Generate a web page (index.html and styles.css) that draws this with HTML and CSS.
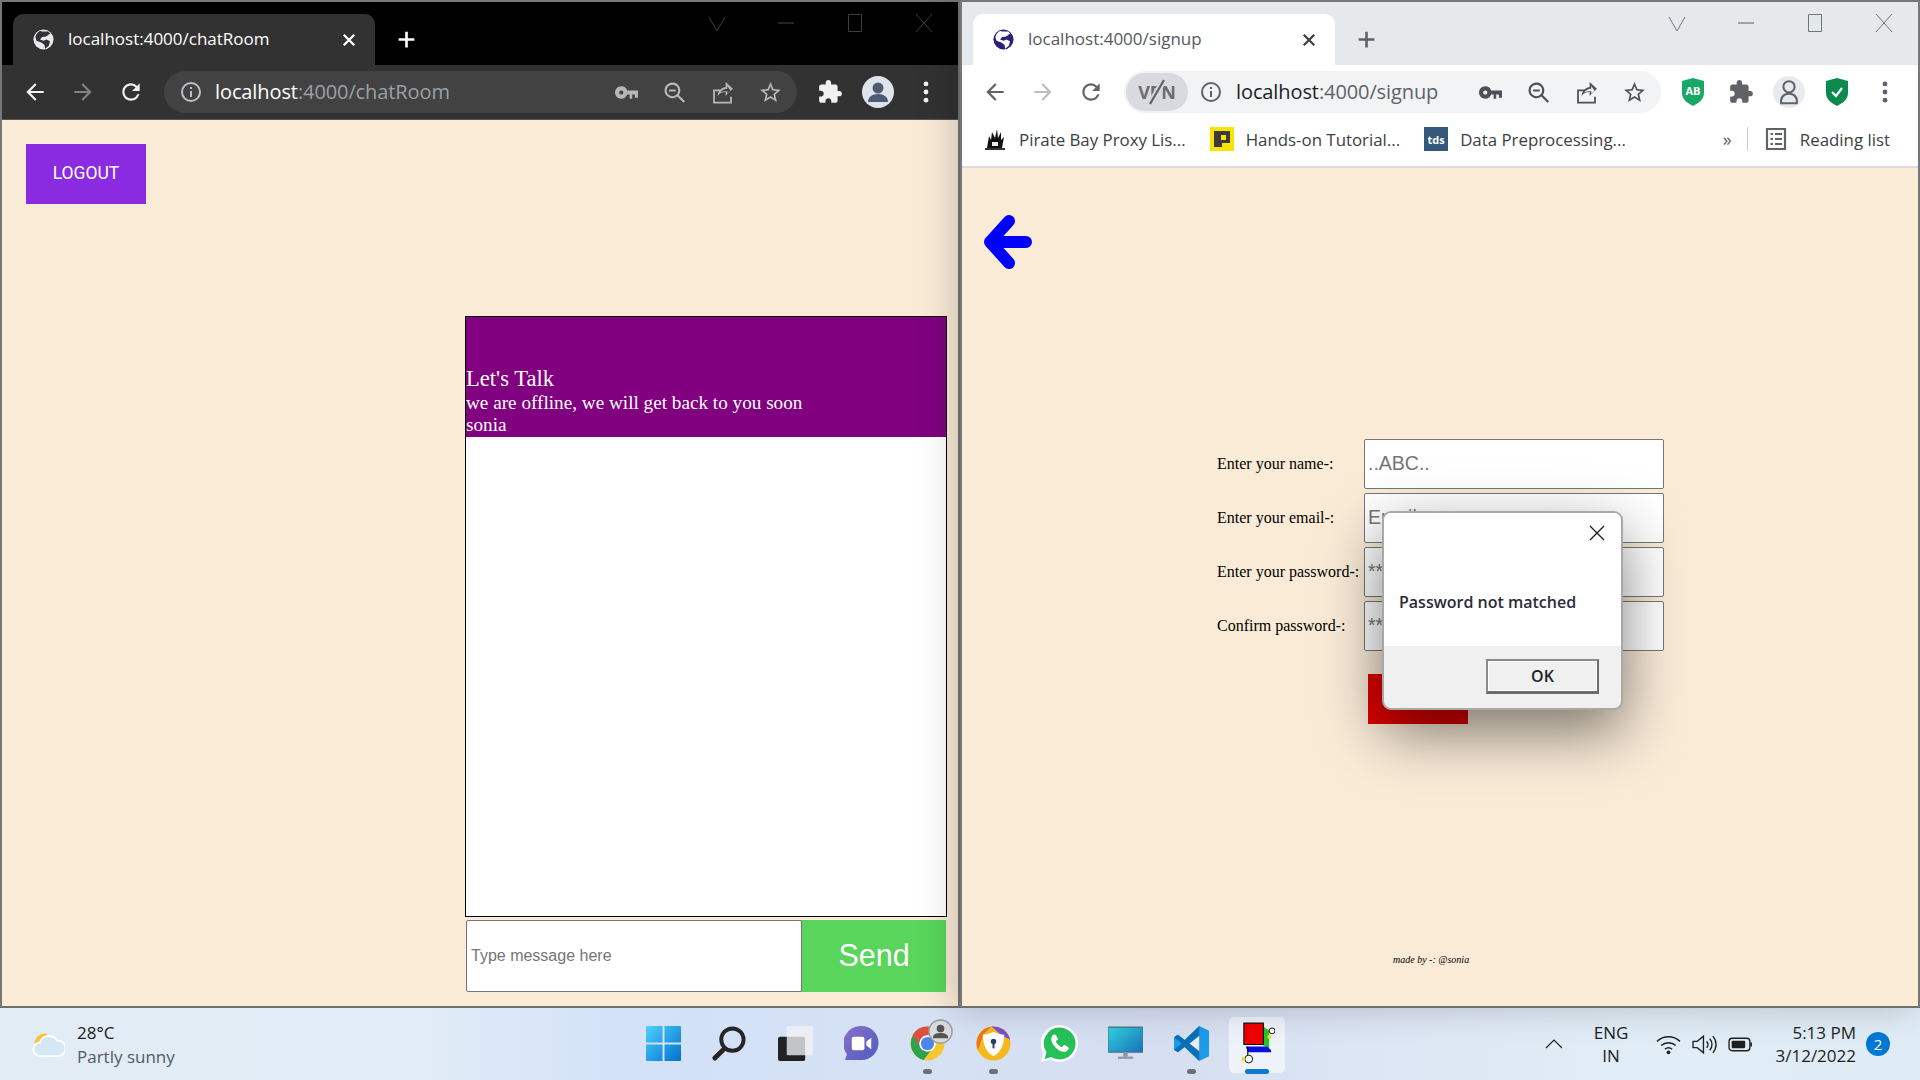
FILE: index.html
```html
<!DOCTYPE html>
<html lang="en">
<head>
<meta charset="utf-8">
<title>Chat room and signup</title>
<link rel="stylesheet" href="styles.css">
</head>
<body>
<svg class="defs" aria-hidden="true">
  <symbol id="back" viewBox="0 0 24 24"><path d="M20 11H7.83l5.59-5.59L12 4l-8 8 8 8 1.41-1.41L7.83 13H20z"/></symbol>
  <symbol id="fwd" viewBox="0 0 24 24"><path d="M4 11h12.17l-5.59-5.59L12 4l8 8-8 8-1.41-1.41L16.17 13H4z"/></symbol>
  <symbol id="reload" viewBox="0 0 24 24"><path d="M17.65 6.35A7.958 7.958 0 0 0 12 4c-4.42 0-7.99 3.58-7.99 8s3.57 8 7.99 8c3.73 0 6.84-2.55 7.73-6h-2.08A5.99 5.99 0 0 1 12 18c-3.31 0-6-2.69-6-6s2.69-6 6-6c1.66 0 3.14.69 4.22 1.78L13 11h7V4l-2.35 2.35z"/></symbol>
  <symbol id="info" viewBox="0 0 24 24"><path d="M11 7h2v2h-2zm0 4h2v6h-2zm1-9a10 10 0 1 0 0 20 10 10 0 0 0 0-20zm0 18a8 8 0 1 1 0-16 8 8 0 0 1 0 16z"/></symbol>
  <symbol id="key" viewBox="0 0 24 24"><path d="M12.65 10A6 6 0 0 0 7 6c-3.31 0-6 2.69-6 6s2.69 6 6 6a6 6 0 0 0 5.65-4H15v4h2.5v-4H20v3h3v-7H12.65zM7 14c-1.1 0-2-.9-2-2s.9-2 2-2 2 .9 2 2-.9 2-2 2z"/></symbol>
  <symbol id="zoomout" viewBox="0 0 24 24"><path d="M10 2.5a7.5 7.5 0 1 0 4.6 13.4l6 6 1.5-1.5-6-6A7.5 7.5 0 0 0 10 2.5zm0 2a5.5 5.5 0 1 1 0 11 5.5 5.5 0 0 1 0-11zM6.8 9h6.4v2H6.800z"/></symbol>
  <symbol id="share" viewBox="0 0 24 24"><path d="M3 9h7v1.700H4.700v10.200h14.600V16H21v6.600H3zM15 2l7 6.500-7 6.500v-3.600c-3.600 0-6 1.300-7.700 4.100.4-4.600 3-7.900 7.700-8.700zm1.600 3.700v2.700c-3.300.2-5.400 1.500-6.700 3.600 1.600-.8 3.800-1.200 6.700-1.100v2.400l3.100-2.900z"/></symbol>
  <symbol id="star" viewBox="0 0 24 24"><path d="M22 9.240l-7.190-.62L12 2 9.190 8.630 2 9.240l5.460 4.730L5.820 21 12 17.270 18.180 21l-1.630-7.030L22 9.240zM12 15.400l-3.760 2.270 1-4.280-3.320-2.880 4.380-.38L12 6.100l1.710 4.040 4.380.38-3.320 2.880 1 4.280L12 15.400z"/></symbol>
  <symbol id="puzzle" viewBox="0 0 24 24"><path d="M20.500 11H19V7c0-1.100-.9-2-2-2h-4V3.500C13 2.120 11.880 1 10.500 1S8 2.120 8 3.500V5H4c-1.100 0-1.990.9-1.990 2v3.800H3.500c1.490 0 2.700 1.210 2.700 2.700s-1.210 2.700-2.700 2.700H2V20c0 1.100.9 2 2 2h3.800v-1.500c0-1.490 1.210-2.700 2.700-2.700 1.490 0 2.700 1.210 2.700 2.700V22H17c1.100 0 2-.9 2-2v-4h1.500c1.380 0 2.500-1.120 2.500-2.500S21.880 11 20.500 11z"/></symbol>
  <symbol id="dots" viewBox="0 0 24 24"><circle cx="12" cy="4.500" r="2.200"/><circle cx="12" cy="12" r="2.200"/><circle cx="12" cy="19.500" r="2.200"/></symbol>
  <symbol id="close" viewBox="0 0 24 24"><path d="M5 5l14 14M19 5L5 19" fill="none" stroke="currentColor" stroke-width="3"/></symbol>
  <symbol id="plus" viewBox="0 0 24 24"><path d="M12 3v18M3 12h18" fill="none" stroke="currentColor" stroke-width="3"/></symbol>
  <symbol id="globe" viewBox="0 0 24 24"><circle cx="12" cy="12" r="11.500"/><path class="land" d="M8 2.200c3 1 6.500.6 9 .6 1.200.8 2 1.400 2.600 2.200L15 8.500l-4.500.5L8 12l4 1.500 3.500-1.500 4 2-1.500 5-4 3.500-1-4.500-3.500-2.500L4 13.500 2.700 9C3.700 5.800 5.500 3.400 8 2.200z"/></symbol>
  <symbol id="chev" viewBox="0 0 20 20"><path d="M2 4l8 14 8-14" fill="none" stroke="currentColor" stroke-width="1"/></symbol>
  <symbol id="mini" viewBox="0 0 20 20"><path d="M2 10h16" fill="none" stroke="currentColor" stroke-width="1.200"/></symbol>
  <symbol id="maxi" viewBox="0 0 20 20"><path d="M3.500 1.500h13v17h-13z" fill="none" stroke="currentColor" stroke-width="1"/></symbol>
  <symbol id="wclose" viewBox="0 0 20 20"><path d="M2 1l16 18M18 1L2 19" fill="none" stroke="currentColor" stroke-width="1"/></symbol>
</svg>

<main class="desktop">
  <section class="window dark">
    <div class="tabstrip">
      <div class="tab">
        <svg class="fav"><use href="#globe"/></svg>
        <span class="tab-title">localhost:4000/chatRoom</span>
        <svg class="tab-x"><use href="#close"/></svg>
      </div>
      <svg class="newtab"><use href="#plus"/></svg>
      <div class="winctl">
        <span class="wc"><svg class="wc-i"><use href="#chev"/></svg></span>
        <span class="wc"><svg class="wc-i"><use href="#mini"/></svg></span>
        <span class="wc"><svg class="wc-i"><use href="#maxi"/></svg></span>
        <span class="wc"><svg class="wc-i"><use href="#wclose"/></svg></span>
      </div>
    </div>
    <div class="toolbar">
      <span class="btn"><svg class="ic"><use href="#back"/></svg></span>
      <span class="btn muted"><svg class="ic"><use href="#fwd"/></svg></span>
      <span class="btn"><svg class="ic"><use href="#reload"/></svg></span>
      <div class="omni">
        <span class="omni-info"><svg class="ic"><use href="#info"/></svg></span>
        <span class="url"><b>localhost</b>:4000/chatRoom</span>
        <span class="btn omni-ic"><svg class="ic"><use href="#key"/></svg></span>
        <span class="btn omni-ic"><svg class="ic"><use href="#zoomout"/></svg></span>
        <span class="btn omni-ic"><svg class="ic"><use href="#share"/></svg></span>
        <span class="btn omni-ic"><svg class="ic"><use href="#star"/></svg></span>
      </div>
      <span class="btn ext"><svg class="ic"><use href="#puzzle"/></svg></span>
      <span class="btn">
        <svg class="avatar" viewBox="0 0 32 32"><circle cx="16" cy="16" r="16" fill="#dfe4ec"/><circle cx="16" cy="12" r="5.500" fill="#4d5c73"/><path d="M6 26c0-5 4-8 10-8s10 3 10 8z" fill="#4d5c73"/></svg>
      </span>
      <span class="btn"><svg class="ic"><use href="#dots"/></svg></span>
    </div>
    <div class="page chat-page">
      <button class="logout">LOGOUT</button>
      <div class="chat">
        <div class="chat-head">
          <div class="chat-title">Let's Talk</div>
          <div class="chat-sub">we are offline, we will get back to you soon</div>
          <div class="chat-sub">sonia</div>
        </div>
      </div>
      <div class="composer">
        <input class="msg" placeholder="Type message here">
        <button class="send">Send</button>
      </div>
    </div>
  </section>

  <section class="window light">
    <div class="tabstrip">
      <div class="tab">
        <svg class="fav"><use href="#globe"/></svg>
        <span class="tab-title">localhost:4000/signup</span>
        <svg class="tab-x"><use href="#close"/></svg>
      </div>
      <svg class="newtab"><use href="#plus"/></svg>
      <div class="winctl">
        <span class="wc"><svg class="wc-i"><use href="#chev"/></svg></span>
        <span class="wc"><svg class="wc-i"><use href="#mini"/></svg></span>
        <span class="wc"><svg class="wc-i"><use href="#maxi"/></svg></span>
        <span class="wc"><svg class="wc-i"><use href="#wclose"/></svg></span>
      </div>
    </div>
    <div class="toolbar">
      <span class="btn"><svg class="ic"><use href="#back"/></svg></span>
      <span class="btn muted"><svg class="ic"><use href="#fwd"/></svg></span>
      <span class="btn"><svg class="ic"><use href="#reload"/></svg></span>
      <div class="omni omni-short">
        <span class="vpn">VPN<svg class="vpn-slash" viewBox="0 0 30 26"><path d="M22 1L8 25" stroke="#d9dadf" stroke-width="6"/><path d="M22 1L8 25" stroke="#5f6368" stroke-width="2.200"/></svg></span>
        <span class="omni-info tight"><svg class="ic"><use href="#info"/></svg></span>
        <span class="url"><b>localhost</b>:4000/signup</span>
        <span class="btn omni-ic"><svg class="ic"><use href="#key"/></svg></span>
        <span class="btn omni-ic"><svg class="ic"><use href="#zoomout"/></svg></span>
        <span class="btn omni-ic"><svg class="ic"><use href="#share"/></svg></span>
        <span class="btn omni-ic"><svg class="ic"><use href="#star"/></svg></span>
      </div>
      <span class="btn ext">
        <svg class="shield" viewBox="0 0 24 28"><path d="M12 0l11 3v12c0 6-5 10-11 13C6 25 1 21 1 15V3z" fill="#18a765"/><text class="ab" x="12" y="17" text-anchor="middle">AB</text></svg>
      </span>
      <span class="btn"><svg class="ic"><use href="#puzzle"/></svg></span>
      <span class="btn">
        <span class="profile"><svg class="prof-i" viewBox="0 0 24 30"><circle cx="12" cy="9" r="6.500" fill="none" stroke="#5f6368" stroke-width="2.400"/><path d="M3 28c-1-7 3-11 9-11s10 4 9 11z" fill="none" stroke="#5f6368" stroke-width="2.400"/></svg></span>
      </span>
      <span class="btn">
        <svg class="shield" viewBox="0 0 24 28"><path d="M12 0l11 3v12c0 6-5 10-11 13C6 25 1 21 1 15V3z" fill="#0b8a50"/><path d="M7 14l4 4 6-8" fill="none" stroke="#fff" stroke-width="2.200"/></svg>
      </span>
      <span class="btn"><svg class="ic"><use href="#dots"/></svg></span>
    </div>
    <div class="bookmarks">
      <span class="bm">
        <svg class="bm-i" viewBox="0 0 24 24"><path d="M4 21l2-12 2 4 1-8 3 6 2-9 1 9 3-6 0 8 3-3-2 11z" fill="#111"/><path d="M2 21h20v2H2z" fill="#333"/><path d="M9 15h6v4H9z" fill="#eee"/></svg>
        <span>Pirate Bay Proxy Lis...</span>
      </span>
      <span class="bm">
        <svg class="bm-i" viewBox="0 0 24 24"><path d="M0 0h24v24H0z" fill="#f7e400"/><path d="M4 4h16v12h-8v4H4z" fill="#3b3b3b"/><path d="M11 8h5v5h-5z" fill="#f7e400"/></svg>
        <span>Hands-on Tutorial...</span>
      </span>
      <span class="bm">
        <span class="tds">tds</span>
        <span>Data Preprocessing...</span>
      </span>
      <span class="bm-more">»</span>
      <span class="bm-sep"></span>
      <span class="bm reading">
        <svg class="bm-i" viewBox="0 0 24 24"><path d="M3 2h18v20H3z" fill="none" stroke="#5f6368" stroke-width="2.200"/><path d="M6.500 7h2.500M11 7h7M6.500 12h2.500M11 12h7M6.500 17h2.500M11 17h7" stroke="#5f6368" stroke-width="2"/></svg>
        <span>Reading list</span>
      </span>
    </div>
    <div class="page signup-page">
      <svg class="big-arrow" viewBox="0 0 50 54"><path d="M43 27H7M26 6L7 27l19 21" fill="none" stroke="#00f" stroke-width="12" stroke-linecap="round" stroke-linejoin="round"/></svg>
      <form class="signup">
        <label class="lbl">Enter your name-:</label><input class="field" placeholder="..ABC..">
        <label class="lbl">Enter your email-:</label><input class="field" placeholder="Email">
        <label class="lbl">Enter your password-:</label><input class="field stars" placeholder="****">
        <label class="lbl">Confirm password-:</label><input class="field stars" placeholder="****">
        <span></span><button class="submit" type="button">Submit</button>
      </form>
      <p class="madeby">made by -: @sonia</p>
      <div class="dialog">
        <div class="dlg-body">
          <svg class="dlg-x" viewBox="0 0 16 16"><path d="M1 1l14 14M15 1L1 15" stroke="#1a1a1a" stroke-width="1.300"/></svg>
          <p class="dlg-msg">Password not matched</p>
        </div>
        <div class="dlg-foot"><button class="dlg-ok">OK</button></div>
      </div>
    </div>
  </section>
</main>

<footer class="taskbar">
  <div class="weather">
    <svg class="wx" viewBox="0 0 34 32"><path d="M3 17a10 10 0 0 1 12-12l4 6-9 9z" fill="#f8c23e"/><path d="M9 28a7 7 0 0 1-1-14 10 10 0 0 1 18-2 8 8 0 0 1 1 16z" fill="#d3e7f4" stroke="#fff" stroke-width="2"/></svg>
    <div class="wx-text"><div class="temp">28°C</div><div class="cond">Partly sunny</div></div>
  </div>
  <div class="apps">
    <span class="app">
      <svg class="app-i" viewBox="0 0 36 36"><defs><linearGradient id="w" x1="0" y1="0" x2="1" y2="1"><stop offset="0" stop-color="#4fd0fb"/><stop offset="1" stop-color="#0072d0"/></linearGradient></defs><path d="M0 1a1 1 0 0 1 1-1h16v17H0zM19 0h16a1 1 0 0 1 1 1v16H19zM0 19h17v17H1a1 1 0 0 1-1-1zM19 19h17v16a1 1 0 0 1-1 1H19z" fill="url(#w)"/></svg>
    </span>
    <span class="app">
      <svg class="app-i" viewBox="0 0 36 36"><circle cx="21" cy="14" r="11.500" fill="none" stroke="#262626" stroke-width="4"/><path d="M13 23L3 33" stroke="#262626" stroke-width="5" stroke-linecap="round"/></svg>
    </span>
    <span class="app">
      <svg class="app-i" viewBox="0 0 36 36"><rect x="0" y="11" width="28" height="25" rx="2" fill="#222"/><rect x="9" y="0" width="27" height="30" rx="1" fill="#f1f2f4" fill-opacity=".78"/></svg>
    </span>
    <span class="app">
      <svg class="app-i" viewBox="0 0 36 36"><defs><linearGradient id="t" x1="0" y1="0" x2="1" y2="1"><stop offset="0" stop-color="#8a70c8"/><stop offset="1" stop-color="#4f5bc0"/></linearGradient></defs><path d="M18 0a17.500 17.500 0 0 1 0 35H1l2-6A18 18 0 0 1 18 0z" fill="url(#t)"/><rect x="8" y="11" width="13" height="14" rx="2" fill="#fff"/><path d="M23 16l5-4v12l-5-4z" fill="#fff"/></svg>
    </span>
    <span class="app running">
      <svg class="app-i" viewBox="0 0 36 36"><circle cx="18" cy="18" r="17.500" fill="#f5c733"/><path d="M18 .5A17.500 17.500 0 0 1 33.200 9.300L18 9.500 7 26 2.800 9A17.500 17.500 0 0 1 18 .5" fill="#dd5144"/><path d="M3 9.500A17.500 17.500 0 0 0 14 35l9-12-11 0z" fill="#2fa24f"/><circle cx="18" cy="18" r="8.500" fill="#fff"/><circle cx="18" cy="18" r="6.800" fill="#4a86ee"/></svg>
      <svg class="app-badge" viewBox="0 0 26 26"><circle cx="13" cy="13" r="12" fill="#d8dadd" stroke="#9a9a9a" stroke-width="1.500"/><circle cx="13" cy="10" r="4" fill="#555"/><path d="M5 20c0-4 3-5.500 8-5.500s8 1.500 8 5.500z" fill="#555"/></svg>
    </span>
    <span class="app running">
      <svg class="app-i" viewBox="0 0 36 36"><circle cx="18" cy="18" r="17.500" fill="#f5b81f"/><path d="M2 25A17.500 17.500 0 0 1 16 .6L8 8z" fill="#f2760f"/><path d="M16 .6A17.500 17.500 0 0 1 35 14l-8-4z" fill="#7a4fd0"/><path d="M18 6c4 2 8 3 11 3 0 12-5 19-11 22C12 28 7 21 7 9c3 0 7-1 11-3z" fill="#fff"/><circle cx="18" cy="16" r="2.800" fill="#2c3e66"/><path d="M17 17h2v6h-2z" fill="#2c3e66"/></svg>
    </span>
    <span class="app">
      <svg class="app-i wa" viewBox="0 0 36 36"><path d="M18 0a18 18 0 1 1-9 33.600L0 36l2.400-8.800A18 18 0 0 1 18 0z" fill="#fff"/><path d="M18 2.500a15.500 15.500 0 1 1-8 28.700L3.500 33l1.800-6.500A15.500 15.500 0 0 1 18 2.500z" fill="#27c15a"/><path d="M13 9c-1 0-3 2-3 4.500C10 19 17 26 22.500 26c2.500 0 4.500-2 4.500-3.500 0-.8-3.500-3-4.500-3-.7 0-1.500 2-2.300 2-1.500 0-5.700-4.200-5.700-5.700 0-.8 2-1.600 2-2.300C16.500 12.500 14 9 13 9z" fill="#fff"/></svg>
    </span>
    <span class="app">
      <svg class="app-i" viewBox="0 0 32 30"><defs><linearGradient id="m" x1="0" y1="0" x2="1" y2="1"><stop offset="0" stop-color="#2fd7e0"/><stop offset="1" stop-color="#1b6fb8"/></linearGradient></defs><rect x="0" y="0" width="32" height="23" rx="1" fill="url(#m)" stroke="#53707f"/><path d="M14 23h4v4h-4z" fill="#8a98a4"/><path d="M9 27h14v2H9z" fill="#8a98a4"/></svg>
    </span>
    <span class="app running">
      <svg class="app-i" viewBox="0 0 36 36"><path d="M26 0l10 5v26l-10 5-15-14.500L4 27l-4-2.500V11.500L4 9l7 5.500z" fill="#1d9be8"/><path d="M26 0v36L11 21.500 4 27l-4-2.500L8 18 0 11.500 4 9l7 5.500z" fill="#0a6fb5"/><path d="M26 10L16 18l10 8z" fill="#e4ecf8"/></svg>
    </span>
    <span class="app active">
      <svg class="app-i" viewBox="0 0 36 46"><path d="M22 4l8 6v18l-8-4z" fill="#22c52c"/><path d="M6 26h22l4 4v2H8z" fill="#0a10d8"/><path d="M4 2h20v22H4z" fill="#f00000" stroke="#111" stroke-width="1.200"/><path d="M8 26v10" stroke="#111" stroke-width="1.200"/><circle cx="33" cy="10" r="3" fill="#fff" stroke="#111"/><circle cx="30" cy="16" r="2" fill="#f2e200"/><circle cx="9" cy="39" r="4" fill="#fff" stroke="#111"/><path d="M2 36l4 3-4 3z" fill="#f2e200"/></svg>
    </span>
  </div>
  <div class="tray">
    <span class="tray-c"><svg class="chevup" viewBox="0 0 18 10"><path d="M1 9l8-8 8 8" fill="none" stroke="#222" stroke-width="1.200"/></svg></span>
    <span class="lang">ENG<br>IN</span>
    <span class="tray-c"><svg class="tray-i" viewBox="0 0 24 24"><path d="M1 9a16 16 0 0 1 22 0M5 13a10.500 10.500 0 0 1 14 0M8.500 16.500a5.500 5.500 0 0 1 7 0" fill="none" stroke="#1f1f1f" stroke-width="1.400"/><circle cx="12" cy="19.500" r="1.800" fill="#1f1f1f"/></svg></span>
    <span class="tray-c"><svg class="tray-i" viewBox="0 0 24 24"><path d="M1 9h4l6-5v16l-6-5H1z" fill="none" stroke="#1f1f1f" stroke-width="1.300"/><path d="M14 9a4 4 0 0 1 0 6M17 6.500a8 8 0 0 1 0 11M20 4a12 12 0 0 1 0 16" fill="none" stroke="#1f1f1f" stroke-width="1.300"/></svg></span>
    <span class="tray-c"><svg class="tray-i" viewBox="0 0 24 24"><rect x="1" y="6" width="20" height="12" rx="3" fill="none" stroke="#1f1f1f" stroke-width="1.300"/><rect x="3.500" y="8.500" width="13" height="7" rx="1" fill="#1f1f1f"/><path d="M21.500 10h1.500v4h-1.500z" fill="#1f1f1f"/></svg></span>
    <span class="clock">5:13 PM<br>3/12/2022</span>
    <span class="badge">2</span>
  </div>
</footer>
</body>
</html>
```

FILE: styles.css
```css
* { box-sizing: border-box; }
html, body { margin: 0; padding: 0; height: 100%; }
body { width: 1920px; height: 1080px; overflow: hidden; display: flex; flex-direction: column; background: #dfe9f5; font-family: "Open Sans", "Noto Sans", sans-serif; }
.defs { position: absolute; width: 0; height: 0; }

.desktop { display: flex; height: 1008px; }
.window { position: relative; width: 960px; display: flex; flex-direction: column; border-top: 2px solid #777; border-bottom: 2px solid #6f6f6f; border-left: 2px solid #777; border-right: 2px solid #777; }
.window.dark { background: #000; color: #fff; --land: #323232; }
.window.light { background: #fff; color: #5f6368; z-index: 1; box-shadow: -6px 0 34px rgba(0,0,0,.2); --land: #fff; }

.tabstrip { height: 63px; flex: none; display: flex; align-items: flex-end; padding-left: 11px; position: relative; }
.dark .tabstrip { background: #000; }
.light .tabstrip { background: #e6e9ec; }
.tab { width: 362px; height: 51px; border-radius: 10px 10px 0 0; display: flex; align-items: center; padding: 0 0 0 20px; }
.dark .tab { background: #323232; color: #fff; }
.light .tab { background: #fff; color: #3c4043; }
.fav { width: 21px; height: 21px; flex: none; fill: #e9eaed; }
.land { fill: var(--land); }
.light .fav { fill: #2a1f7a; }
.tab-title { margin: 0 0 2px 14px; width: 272px; font-size: 17px; white-space: nowrap; }
.light .tab-title { color: #55595e; }
.tab-x { width: 18px; height: 18px; flex: none; color: inherit; }
.newtab { width: 21px; height: 21px; margin: 0 0 15px 21px; flex: none; }
.dark .newtab { color: #fff; }
.light .newtab { color: #5f6368; }
.winctl { margin-left: auto; align-self: flex-start; display: flex; padding-top: 11px; }
.dark .winctl { color: #3e3e3e; }
.light .winctl { color: #70757a; }
.wc { width: 69px; height: 20px; display: flex; justify-content: center; }
.wc-i { width: 20px; height: 20px; }

.toolbar { height: 54px; flex: none; display: flex; align-items: center; padding-left: 9px; }
.dark .toolbar { height: 55px; background: #323232; color: #f1f1f1; border-bottom: 1px solid #555; }
.light .toolbar { background: #fff; }
.btn { width: 48px; height: 48px; flex: none; display: flex; align-items: center; justify-content: center; fill: currentColor; }
.btn.muted { opacity: .42; }
.ic { width: 26px; height: 26px; fill: currentColor; }
.omni { flex: none; width: 633px; height: 42px; margin-left: 9px; border-radius: 21px; display: flex; align-items: center; padding-right: 3px; }
.dark .omni { background: #424242; }
.light .omni { background: #f1f3f4; width: 537px; }
.omni-info { width: 51px; padding-left: 15px; display: flex; flex: none; }
.dark .omni-info { color: #bdc1c6; }
.omni-info.tight { width: 48px; padding-left: 11px; }
.omni-info .ic { width: 24px; height: 24px; }
.url { flex: 1; font-size: 20px; white-space: nowrap; letter-spacing: -.1px; padding-bottom: 1px; }
.url b { font-weight: 400; }
.dark .url { color: #9aa0a6; }
.dark .url b { color: #fff; }
.light .url { color: #5f6368; }
.light .url b { color: #202124; }
.omni-ic { width: 48px; }
.dark .omni-ic { color: #b8b8b8; }
.light .omni-ic { color: #4d5156; }
.omni-ic .ic { width: 25px; height: 25px; }
.ext { margin-left: 9px; }
.light .ext { margin-left: 8px; }
.avatar { width: 32px; height: 32px; }
.vpn { position: relative; flex: none; width: 62px; height: 38px; margin-left: 2px; border-radius: 19px; background: #d9dadf; color: #6a6d72; font-size: 18px; font-weight: 700; display: flex; align-items: center; justify-content: center; }
.vpn-slash { position: absolute; left: 16px; top: 6px; width: 30px; height: 26px; }
.shield { width: 24px; height: 28px; }
.ab { font: 700 11px "Open Sans", sans-serif; fill: #fff; }
.profile { width: 32px; height: 32px; border-radius: 50%; background: #e8eaed; display: flex; align-items: center; justify-content: center; }
.prof-i { width: 22px; height: 26px; }

.bookmarks { height: 49px; flex: none; background: #fff; border-bottom: 2px solid #dadce0; display: flex; align-items: center; padding: 0 0 7px 21px; font-size: 16.850px; color: #3c4043; }
.bm { display: flex; align-items: center; gap: 12px; white-space: nowrap; margin-right: 24px; }
.bm-i { width: 24px; height: 24px; flex: none; }
.tds { width: 24px; height: 24px; background: #33587a; color: #fff; font-size: 11px; font-weight: 700; display: flex; align-items: center; justify-content: center; flex: none; }
.bm-more { margin-left: 73px; width: 24px; font-size: 18px; color: #5f6368; }
.bm-sep { width: 1px; height: 24px; background: #c8cacd; margin-right: 16px; }
.reading { margin: 0; }

.page { flex: 1; background: #faebd7; position: relative; color: #000; }
.chat-page { display: flex; flex-direction: column; padding: 24px 0 0 24px; }
.logout { width: 120px; height: 60px; flex: none; border: 0; padding: 0 0 2px; background: #8a2be2; color: #fff; font: 400 17.500px "Roboto", sans-serif; }
.chat { width: 482px; height: 601px; flex: none; margin: 112px 0 0 439px; background: #fff; border: 1px solid #000; }
.chat-head { height: 120px; background: #800080; color: #fff; font-family: "Liberation Serif", serif; display: flex; flex-direction: column; justify-content: flex-end; padding-bottom: 1px; }
.chat-title { font-size: 22.600px; line-height: 27px; }
.chat-sub { font-size: 19.200px; line-height: 22px; }
.composer { display: flex; height: 72px; flex: none; margin: 3px 0 0 440px; }
.msg { width: 336px; height: 72px; border: 1px solid #767676; border-radius: 2px 0 0 2px; padding: 0 4px; font: 16px "Liberation Sans", sans-serif; background: #fff; }
.msg::placeholder, .field::placeholder { color: #757575; opacity: 1; }
.send { width: 144px; height: 72px; border: 0; padding: 0 0 2px; background: #58d55a; color: #fff; font: 30.500px "Liberation Sans", sans-serif; }

.signup-page { display: flex; flex-direction: column; padding: 47px 0 0 21px; }
.big-arrow { width: 50px; height: 54px; flex: none; }
.signup { display: grid; grid-template-columns: 147px 300px; grid-auto-rows: 50px; row-gap: 4px; margin: 170px 0 0 234px; align-items: center; }
.lbl { font: 16px "Liberation Serif", serif; color: #000; }
.field { width: 300px; height: 50px; border: 1px solid #767676; border-radius: 2px; padding: 0 3px 2px; background: #fff; font: 19.500px "Liberation Sans", sans-serif; }
.submit { width: 100px; height: 50px; align-self: start; margin: 19px 0 0 4px; border: 0; background: #e00000; color: #fff; font: 20px "Liberation Sans", sans-serif; }
.madeby { margin: auto 0 41px 410px; font: italic 10px "Liberation Serif", serif; color: #000; white-space: nowrap; }

.dialog { position: absolute; left: 420px; top: 343px; width: 241px; height: 199px; border-radius: 9px; border: 2px solid #a8a8a8; background: #f0f0f0; display: flex; flex-direction: column; box-shadow: 0 22px 60px rgba(0,0,0,.5); color: #000; }
.dlg-body { position: relative; height: 133px; background: #fff; border-radius: 7px 7px 0 0; flex: none; padding: 78px 0 0 15px; }
.dlg-x { position: absolute; right: 16px; top: 12px; width: 16px; height: 16px; }
.dlg-msg { margin: 0; font: 600 16px "Open Sans", sans-serif; color: #2b2b3a; white-space: nowrap; }
.dlg-foot { flex: 1; display: flex; justify-content: flex-end; padding: 13px 22px 0 0; border-radius: 0 0 7px 7px; }
.dlg-ok { width: 113px; height: 35px; background: #f0f0f0; border: 2px solid #8a8a8a; border-right-color: #6c6c6c; border-bottom: 3px solid #6c6c6c; box-shadow: inset 0 0 0 1px #fff; font: 600 16px "Open Sans", sans-serif; color: #222; }

.taskbar { flex: 1; display: flex; align-items: stretch; background: linear-gradient(90deg, #e2ecf5 0%, #e1ecf6 22%, #d3e2f8 32%, #d6e1f4 50%, #d6dff1 60%, #dde6f4 72%, #e1edf6 85%, #dfebf5 100%); }
.weather { width: 630px; flex: none; display: flex; align-items: center; padding-left: 32px; gap: 12px; }
.wx { width: 33px; height: 31px; }
.wx-text { line-height: 24px; font-size: 17px; margin-top: 2px; }
.temp { color: #1b1b1b; }
.cond { color: #555a60; }
.apps { width: 660px; flex: none; display: flex; }
.app { position: relative; width: 66px; display: flex; align-items: center; justify-content: center; padding-bottom: 2px; }
.app-i { width: 35px; height: 35px; }
.app-i.wa { width: 37px; height: 37px; }
.running::after { content: ""; position: absolute; left: 29px; bottom: 6px; width: 9px; height: 5px; border-radius: 3px; background: #6c7078; }
.app-badge { position: absolute; left: 34px; top: 11px; width: 25px; height: 25px; }
.active::before { content: ""; position: absolute; left: 5px; right: 5px; top: 9px; bottom: 7px; border-radius: 5px; background: #edf2fb; }
.active .app-i { position: relative; height: 45px; }
.active::after { content: ""; position: absolute; left: 21px; bottom: 6px; width: 24px; height: 5px; border-radius: 3px; background: #0a78d4; }
.tray { flex: 1; display: flex; justify-content: flex-end; align-items: center; padding-right: 30px; color: #1e1e1e; }
.tray-c { width: 36px; display: flex; justify-content: center; align-items: center; }
.chevup { width: 18px; height: 10px; }
.tray-i { width: 25px; height: 25px; }
.lang { width: 78px; text-align: center; font-size: 17px; line-height: 23px; }
.clock { width: 98px; text-align: right; font-size: 17px; line-height: 23px; white-space: nowrap; }
.badge { width: 24px; height: 24px; margin-left: 10px; border-radius: 50%; background: #0078d4; color: #fff; font-size: 15px; display: flex; align-items: center; justify-content: center; }
```
